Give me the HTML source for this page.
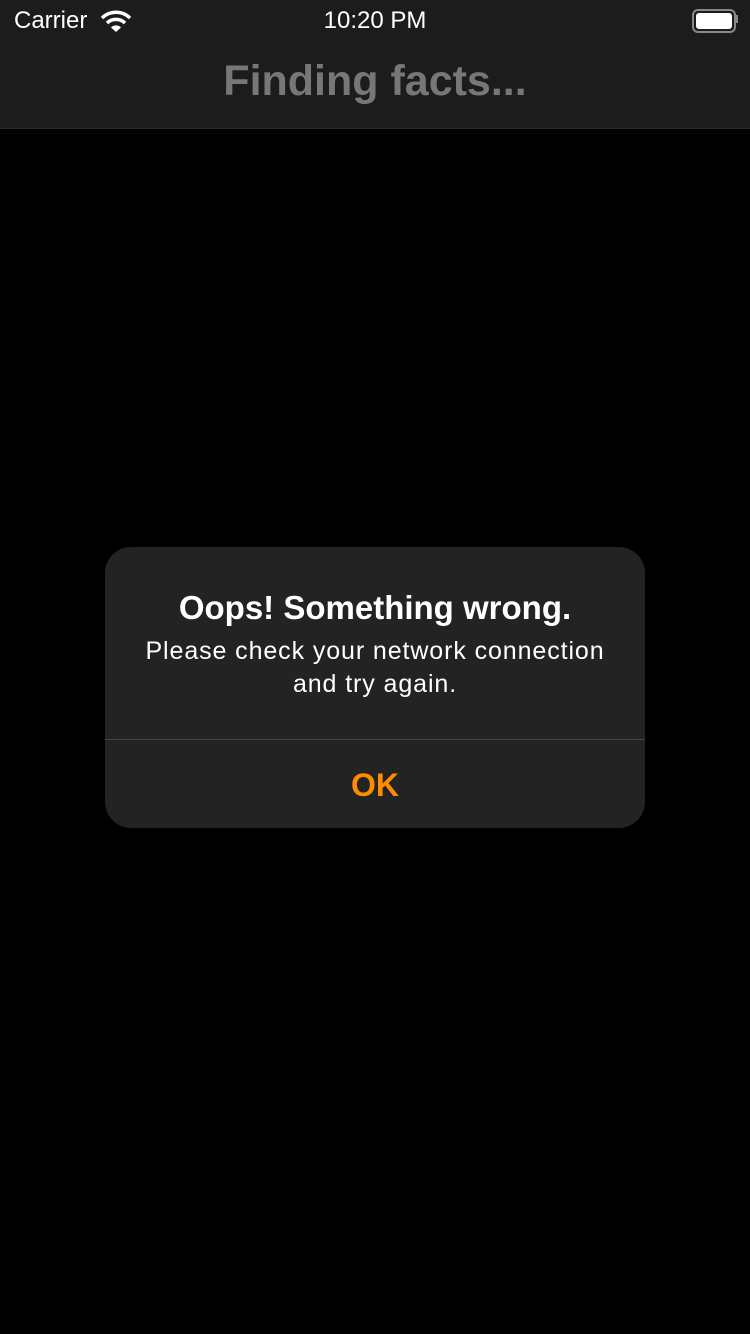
<!DOCTYPE html>
<html><head><style>
body{margin:0;width:750px;height:1334px;background:#000;font-family:"Liberation Sans",sans-serif;position:relative;overflow:hidden}
.top{position:absolute;left:0;top:0;width:750px;height:128px;background:#1c1c1c;border-bottom:1px solid #2a2a2a}
.t{position:absolute;color:#fff}
.alert{position:absolute;left:105px;top:547px;width:540px;height:281px;background:#232323;border-radius:26px}
</style></head><body>
<div class="top">
<div class="t" style="left:14px;top:7px;font-size:24px">Carrier</div>
<svg style="position:absolute;left:100px;top:9px" width="32" height="24" viewBox="0 0 32 24"><path d="M2 9a20 20 0 0 1 28 0" stroke="#fff" stroke-width="3.5" fill="none"/><path d="M7 14a13 13 0 0 1 18 0" stroke="#fff" stroke-width="3.5" fill="none"/><path d="M11 18.5a7 7 0 0 1 10 0L16 23z" fill="#fff"/></svg>
<div class="t" style="left:0;width:750px;text-align:center;top:7px;font-size:24px">10:20 PM</div>
<div style="position:absolute;left:692px;top:9px;width:40px;height:20px;border:2px solid #888;border-radius:6px"></div>
<div style="position:absolute;left:696px;top:13px;width:36px;height:16px;background:#fff;border-radius:3px"></div>
<div style="position:absolute;left:736px;top:15px;width:2px;height:8px;background:#888"></div>
<div class="t" style="left:0;width:750px;text-align:center;top:57px;font-size:43px;color:#777;font-weight:bold">Finding facts...</div>
</div>
<div class="alert">
<div class="t" style="left:0;width:540px;text-align:center;top:42px;font-size:33px;font-weight:bold">Oops! Something wrong.</div>
<div class="t" style="left:0;width:540px;text-align:center;top:88px;font-size:25px;line-height:33px;letter-spacing:0.9px">Please check your network connection<br>and try again.</div>
<div style="position:absolute;left:0;top:192px;width:540px;height:1px;background:#444"></div>
<div class="t" style="left:0;width:540px;text-align:center;top:220px;font-size:32px;color:#ff8c00;font-weight:bold">OK</div>
</div>
</body></html>
